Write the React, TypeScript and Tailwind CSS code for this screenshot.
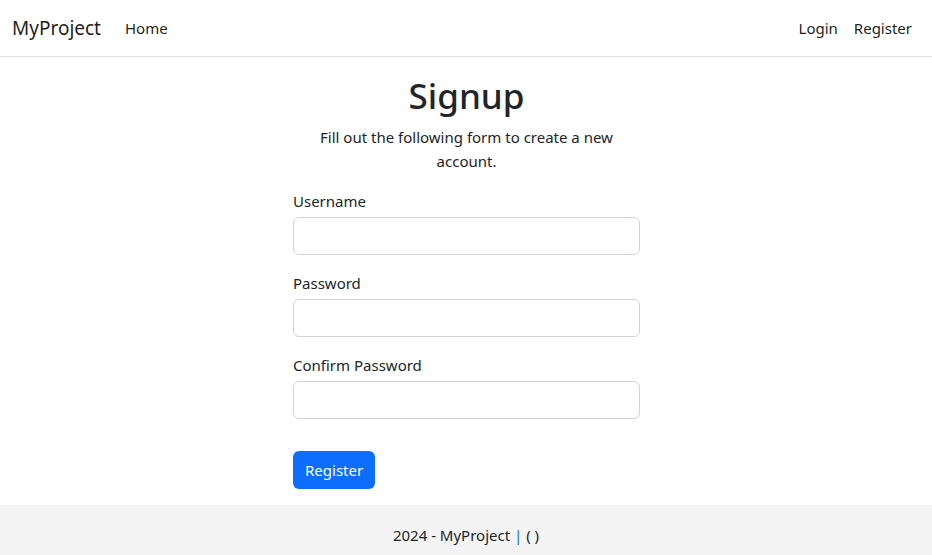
import { useState } from "react";

const font = { fontFamily: '"Noto Sans", "Open Sans", sans-serif' };

function Field({ label, type, value, onChange }: { label: string; type: string; value: string; onChange: (v: string) => void }) {
  return (
    <div className="mb-4">
      <label className="mb-1 block text-[15px] leading-6 text-[#212529]">{label}</label>
      <input
        className="block h-[38px] w-full rounded-md border border-[#ced4da] bg-white px-3 text-[15px] text-[#212529] outline-none focus:border-[#86b7fe]"
        type={type}
        value={value}
        onChange={(event) => onChange(event.target.value)}
      />
    </div>
  );
}

export default function App() {
  const [username, setUsername] = useState("");
  const [password, setPassword] = useState("");
  const [confirm, setConfirm] = useState("");

  return (
    <div className="flex h-[555px] flex-col bg-white text-[#212529]" style={font}>
      <nav className="flex h-[57px] items-center border-b border-[#dee2e6] px-3">
        <a className="mr-4 text-[19px] leading-[30px] text-black/90" href="#">
          MyProject
        </a>
        <a className="px-2 text-[15px] leading-6 text-black/90" href="#">
          Home
        </a>
        <div className="ml-auto flex items-center">
          <a className="px-2 text-[15px] leading-6 text-black/90" href="#">
            Login
          </a>
          <a className="px-2 text-[15px] leading-6 text-black/90" href="#">
            Register
          </a>
        </div>
      </nav>

      <main className="flex-1 pt-3">
        <div className="mx-auto w-[348px] pl-px">
          <h1 className="mt-[3px] mb-[5px] text-center text-[35px] font-medium leading-[48px]">Signup</h1>
          <p className="mb-4 text-center text-[15px] leading-6">
            Fill out the following form to create a new account.
          </p>
          <form onSubmit={(event) => event.preventDefault()}>
            <Field label="Username" type="text" value={username} onChange={setUsername} />
            <Field label="Password" type="password" value={password} onChange={setPassword} />
            <Field label="Confirm Password" type="password" value={confirm} onChange={setConfirm} />
            <button
              className="mt-4 h-[38px] rounded-md bg-[#0d6efd] px-3 text-[15px] leading-6 text-white hover:bg-[#0b5ed7]"
              type="submit"
            >
              Register
            </button>
          </form>
        </div>
      </main>

      <footer className="h-[50px] bg-[#f4f4f4] pt-[18px] text-center text-[15px] leading-6">
        2024 - MyProject <span className="text-[#0d6efd]">|</span> ( )
      </footer>
    </div>
  );
}
